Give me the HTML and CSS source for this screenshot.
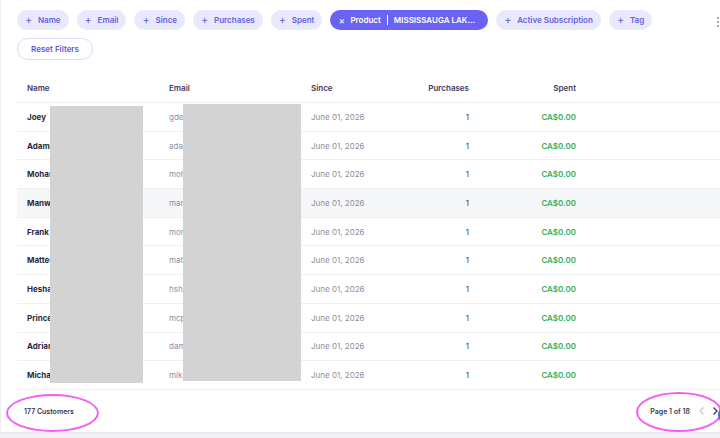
FILE: index.html
```html
<!DOCTYPE html>
<html lang="en">
<head>
  <meta charset="UTF-8">
  <title>Customers</title>
  <link rel="stylesheet" href="styles.css">
</head>
<body>
  <div class="card">
    <div class="filters">
      <span class="chip"><span class="ico">+</span>Name</span>
      <span class="chip"><span class="ico">+</span>Email</span>
      <span class="chip"><span class="ico">+</span>Since</span>
      <span class="chip"><span class="ico">+</span>Purchases</span>
      <span class="chip"><span class="ico">+</span>Spent</span>
      <span class="chip active"><span class="ico x">×</span>Product<span class="sep"></span>MISSISSAUGA LAK...</span>
      <span class="chip"><span class="ico">+</span>Active Subscription</span>
      <span class="chip"><span class="ico">+</span>Tag</span>
    </div>
    <div class="kebab"><i></i><i></i><i></i></div>
    <button class="reset">Reset Filters</button>

    <div class="grid">
      <div class="row head">
        <div>Name</div><div>Email</div><div>Since</div><div class="num">Purchases</div><div class="num">Spent</div><div></div>
      </div>
      <div class="row"><div class="nm">Joey</div><div class="mut">gde</div><div class="mut">June 01, 2026</div><div class="num cnt">1</div><div class="num money">CA$0.00</div><div></div></div>
      <div class="row"><div class="nm">Adam</div><div class="mut">ada</div><div class="mut">June 01, 2026</div><div class="num cnt">1</div><div class="num money">CA$0.00</div><div></div></div>
      <div class="row"><div class="nm">Mohan</div><div class="mut">moh</div><div class="mut">June 01, 2026</div><div class="num cnt">1</div><div class="num money">CA$0.00</div><div></div></div>
      <div class="row hover"><div class="nm">Manw</div><div class="mut">man</div><div class="mut">June 01, 2026</div><div class="num cnt">1</div><div class="num money">CA$0.00</div><div></div></div>
      <div class="row"><div class="nm">Frank</div><div class="mut">mon</div><div class="mut">June 01, 2026</div><div class="num cnt">1</div><div class="num money">CA$0.00</div><div></div></div>
      <div class="row"><div class="nm">Matteo</div><div class="mut">mat</div><div class="mut">June 01, 2026</div><div class="num cnt">1</div><div class="num money">CA$0.00</div><div></div></div>
      <div class="row"><div class="nm">Hesha</div><div class="mut">hsh</div><div class="mut">June 01, 2026</div><div class="num cnt">1</div><div class="num money">CA$0.00</div><div></div></div>
      <div class="row"><div class="nm">Prince</div><div class="mut">mcp</div><div class="mut">June 01, 2026</div><div class="num cnt">1</div><div class="num money">CA$0.00</div><div></div></div>
      <div class="row"><div class="nm">Adrian</div><div class="mut">dam</div><div class="mut">June 01, 2026</div><div class="num cnt">1</div><div class="num money">CA$0.00</div><div></div></div>
      <div class="row"><div class="nm">Micha</div><div class="mut">mik</div><div class="mut">June 01, 2026</div><div class="num cnt">1</div><div class="num money">CA$0.00</div><div></div></div>
      <div class="redact r1"></div>
      <div class="redact r2"></div>
    </div>

    <div class="footer">
      <span class="total">177 Customers</span>
      <div class="pager">
        <span>Page 1 of 18</span>
        <svg width="8" height="10" viewBox="0 0 8 10"><path d="M5.5 1.5 2 5l3.5 3.5" fill="none" stroke="#c9c9d3" stroke-width="1.3"/></svg>
        <svg width="8" height="10" viewBox="0 0 8 10"><path d="M2.5 1.5 6 5 2.5 8.5" fill="none" stroke="#3c3a55" stroke-width="1.3"/></svg>
      </div>
    </div>
    <div class="mark m1"></div>
    <div class="mark m2"></div>
    <div class="fab"></div>
  </div>
</body>
</html>
```

FILE: styles.css
```css
* { box-sizing: border-box; margin: 0; padding: 0; }
html, body { width: 100%; height: 100%; }
body {
  background: #f2f2f4;
  font-family: Inter, "Noto Sans", sans-serif;
  font-size: 8px;
  color: #2e2c46;
  overflow: hidden;
}
.card {
  position: relative; margin-left: 1px; height: 432px;
  background: #fff; padding: 10px 0 0 16px;
  box-shadow: 0 1px 2px rgba(0,0,0,0.06);
}
/* filter chips */
.filters { display: flex; gap: 8px; white-space: nowrap; }
.chip {
  display: inline-flex; align-items: center; height: 20px;
  padding: 0 8px; border-radius: 10px;
  background: #e9e9fd; color: #6660e6; font-weight: 600;
}
.chip .ico { font-size: 11px; font-weight: 400; width: 7px; margin-right: 6px; line-height: 1; }
.chip.active { background: #6a62f2; color: #fff; padding-right: 13px; }
.chip .ico.x { font-size: 10px; margin-right: 5px; }
.chip .sep { width: 1px; height: 10px; background: #fff; margin: 0 6px; }
.kebab {
  position: absolute; top: 17px; right: 1px;
  display: flex; flex-direction: column; gap: 2px;
}
.kebab i { width: 2px; height: 2px; background: #8a8a95; border-radius: 50%; }
.reset {
  margin-top: 8px; height: 22px; width: 76px;
  border: 1px solid #dcdafb; border-radius: 11px; background: #fff;
  font-family: inherit; font-size: 8px; font-weight: 600; color: #5d57d6;
}
/* table */
.grid { position: relative; margin-top: 14px; }
.row {
  display: grid; grid-template-columns: 142px 142px 80px 98px 107px 1fr;
  height: 28.7px; align-items: center; border-bottom: 1px solid #efeff2;
}
.row > div { padding: 0 10px; white-space: nowrap; overflow: hidden; }
.row.head { font-weight: 600; color: #3e3b5c; height: 29px; }
.row.hover { background: #f6f7f9; }
.num { text-align: right; }
.nm { font-weight: 700; color: #2b2943; }
.mut { color: #8e8ea2; }
.cnt { color: #3a3950; }
.money { color: #38b25a; font-weight: 600; }
.redact { position: absolute; background: #d3d3d3; }
.r1 { left: 33px; top: 32px; width: 93px; height: 277px; }
.r2 { left: 166px; top: 30px; width: 118px; height: 277px; }
/* footer */
.footer {
  display: flex; justify-content: space-between; align-items: center;
  height: 43px; padding: 0 1px 0 7px; font-weight: 600; color: #3a3850;
}
.total { font-size: 7px; }
.pager { display: flex; align-items: center; gap: 5px; font-size: 7px; }
.pager span { margin-right: 3px; }
.mark { position: absolute; border: 2px solid #f35ff0; border-radius: 50%; }
.m1 { left: 5px; top: 394px; width: 93px; height: 38px; }
.m2 { left: 635px; top: 392px; width: 86px; height: 40px; }
.fab { position: absolute; left: 717px; top: 404px; width: 24px; height: 22px; border-radius: 50%; background: #5c5cf2; }
```
